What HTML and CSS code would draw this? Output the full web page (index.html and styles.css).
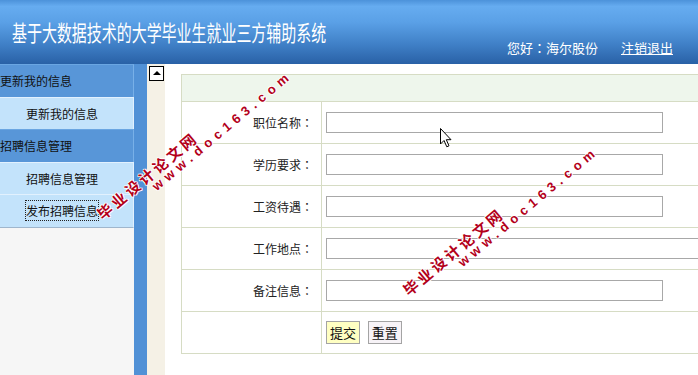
FILE: index.html
```html
<!DOCTYPE html>
<html lang="zh-CN">
<head>
    <meta charset="UTF-8">
    <title>基于大数据技术的大学毕业生就业三方辅助系统</title>
    <link rel="stylesheet" href="styles.css">
</head>
<body>

<div class="top">
    <h1 class="title"><span>基于大数据技术的大学毕业生就业三方辅助系统</span></h1>
    <div class="user">您好<span class="colon" lang="zh-TW">：</span>海尔股份<a href="#">注销退出</a></div>
</div>

<div class="frame">
    <div class="side">
        <div class="menu-head">更新我的信息</div>
        <a class="menu-item" href="#">更新我的信息</a>
        <div class="menu-head">招聘信息管理</div>
        <a class="menu-item" href="#">招聘信息管理</a>
        <a class="menu-item" href="#"><span class="focus">发布招聘信息</span></a>
    </div>
    <div class="split"></div>
    <div class="toggle"><span class="toggle-btn"></span></div>
    <div class="main">
        <table class="form-table">
            <tr class="head-row"><td colspan="2"></td></tr>
            <tr>
                <td class="label">职位名称<span class="colon" lang="zh-TW">：</span></td>
                <td class="field"><input type="text" class="txt"></td>
            </tr>
            <tr>
                <td class="label">学历要求<span class="colon" lang="zh-TW">：</span></td>
                <td class="field"><input type="text" class="txt"></td>
            </tr>
            <tr>
                <td class="label">工资待遇<span class="colon" lang="zh-TW">：</span></td>
                <td class="field"><input type="text" class="txt"></td>
            </tr>
            <tr>
                <td class="label">工作地点<span class="colon" lang="zh-TW">：</span></td>
                <td class="field"><input type="text" class="txt wide"></td>
            </tr>
            <tr>
                <td class="label">备注信息<span class="colon" lang="zh-TW">：</span></td>
                <td class="field"><input type="text" class="txt"></td>
            </tr>
            <tr>
                <td class="label"></td>
                <td class="field">
                    <button class="btn btn-submit">提交</button>
                    <button class="btn btn-reset">重置</button>
                </td>
            </tr>
        </table>
    </div>
</div>

<!-- watermark -->
<div class="wm wm-one">
    <div class="wm-cn">毕业设计论文网</div>
    <div class="wm-en">www.doc163.com</div>
</div>
<div class="wm wm-two">
    <div class="wm-cn">毕业设计论文网</div>
    <div class="wm-en">www.doc163.com</div>
</div>

<svg class="cursor" width="13" height="20" viewBox="0 0 13 20">
    <path d="M0.5 0.5 L0.5 16 L4 12.5 L6.8 18.8 L9 17.8 L6.3 11.7 L11 11.7 Z" fill="#fff" stroke="#000" stroke-width="1"/>
</svg>

</body>
</html>
```

FILE: styles.css
```css
body {
    margin: 0;
    font-family: "Noto Sans CJK SC", sans-serif;
    font-size: 12px;
    color: #222;
    overflow: hidden;
}
.colon {
    font-family: "Noto Sans CJK TC", sans-serif;
}
.top {
    height: 64px;
    display: flex;
    justify-content: space-between;
    color: #fff;
    background: linear-gradient(#4c92da 0, #66acf0 10%, #5aa0e6 35%, #3f7fc6 70%, #2961a6 100%);
}
.title {
    margin: 0;
    padding: 20px 0 0 12px;
    font-size: 22px;
    font-weight: normal;
    line-height: 22px;
    white-space: nowrap;
}
.title span {
    display: inline-block;
    transform: scaleX(0.68);
    transform-origin: left center;
}
.user {
    padding: 40px 25px 0 0;
    font-size: 13px;
    line-height: 16px;
    white-space: nowrap;
}
.user a {
    color: #fff;
    margin-left: 23px;
}
.frame {
    display: flex;
    height: 311px;
}
.side {
    width: 134px;
    background: #f6f6f6;
}
.menu-head {
    height: 32px;
    line-height: 32px;
    background: #5896d8;
    border-top: 1px solid #6aa6e2;
    border-right: 1px solid #78b0e8;
    color: #111;
}
.menu-item {
    display: block;
    height: 31px;
    line-height: 31px;
    padding-left: 26px;
    background: #c3e3fb;
    border-top: 1px solid #e2f1fe;
    border-right: 1px solid #e2f1fe;
    color: #111;
    text-decoration: none;
}
.menu-item:last-child {
    height: 32px;
    border-bottom: 1px solid #9fb6cc;
}
.focus {
    display: inline-block;
    line-height: 19px;
    margin-left: -1px;
    border: 1px dotted #222;
}
.split {
    width: 13px;
    background: #5191d6;
}
.toggle {
    width: 18px;
    background: #f5f1e6;
    padding-top: 2px;
}
.toggle-btn {
    display: block;
    position: relative;
    width: 13px;
    height: 13px;
    margin-left: 2px;
    background: #fff;
    border: 1px solid #000;
}
.toggle-btn::after {
    content: "";
    position: absolute;
    left: 3px;
    top: 4px;
    border-left: 4px solid transparent;
    border-right: 4px solid transparent;
    border-bottom: 4px solid #000;
}
.main {
    flex: 1;
    padding: 10px 0 0 16px;
    background: #fff;
    overflow: hidden;
}
.form-table {
    border-collapse: collapse;
    width: 620px;
}
.form-table td {
    border: 1px solid #d6dcc4;
    padding: 0;
    height: 41px;
}
.head-row td {
    height: 26px;
    background: #eef6ec;
}
.label {
    width: 131px;
    padding-right: 8px !important;
    text-align: right;
    color: #222;
}
.field {
    padding-left: 4px !important;
}
.txt {
    display: block;
    box-sizing: border-box;
    width: 337px;
    height: 21px;
    margin: 0;
    padding: 0 2px;
    border: 1px solid #a8a8a8;
    background: #fff;
}
.txt.wide {
    width: 420px;
}
.btn {
    box-sizing: border-box;
    width: 34px;
    height: 23px;
    padding: 0;
    margin: 0 5px 0 0;
    border: 1px solid #a4a4a4;
    font-family: "Noto Sans CJK SC", sans-serif;
    font-size: 13px;
    color: #111;
    vertical-align: middle;
}
.btn-submit {
    background: #ffffc2;
}
.btn-reset {
    background: #f7f3f7;
}
.wm {
    position: absolute;
    transform: rotate(-40deg);
    transform-origin: 0 0;
    color: #b3001a;
    font-weight: bold;
    white-space: nowrap;
    text-shadow: 1px 0 #fff, -1px 0 #fff, 0 1px #fff, 0 -1px #fff;
}
.wm-one {
    left: 94px;
    top: 210px;
}
.wm-two {
    left: 400px;
    top: 286px;
}
.wm-cn {
    font-size: 15px;
    line-height: 15px;
    letter-spacing: 3px;
}
.wm-en {
    font-family: "Liberation Sans", sans-serif;
    font-size: 13px;
    line-height: 13px;
    letter-spacing: 5px;
    padding-left: 60px;
}
.cursor {
    position: absolute;
    left: 440px;
    top: 128px;
}
```
